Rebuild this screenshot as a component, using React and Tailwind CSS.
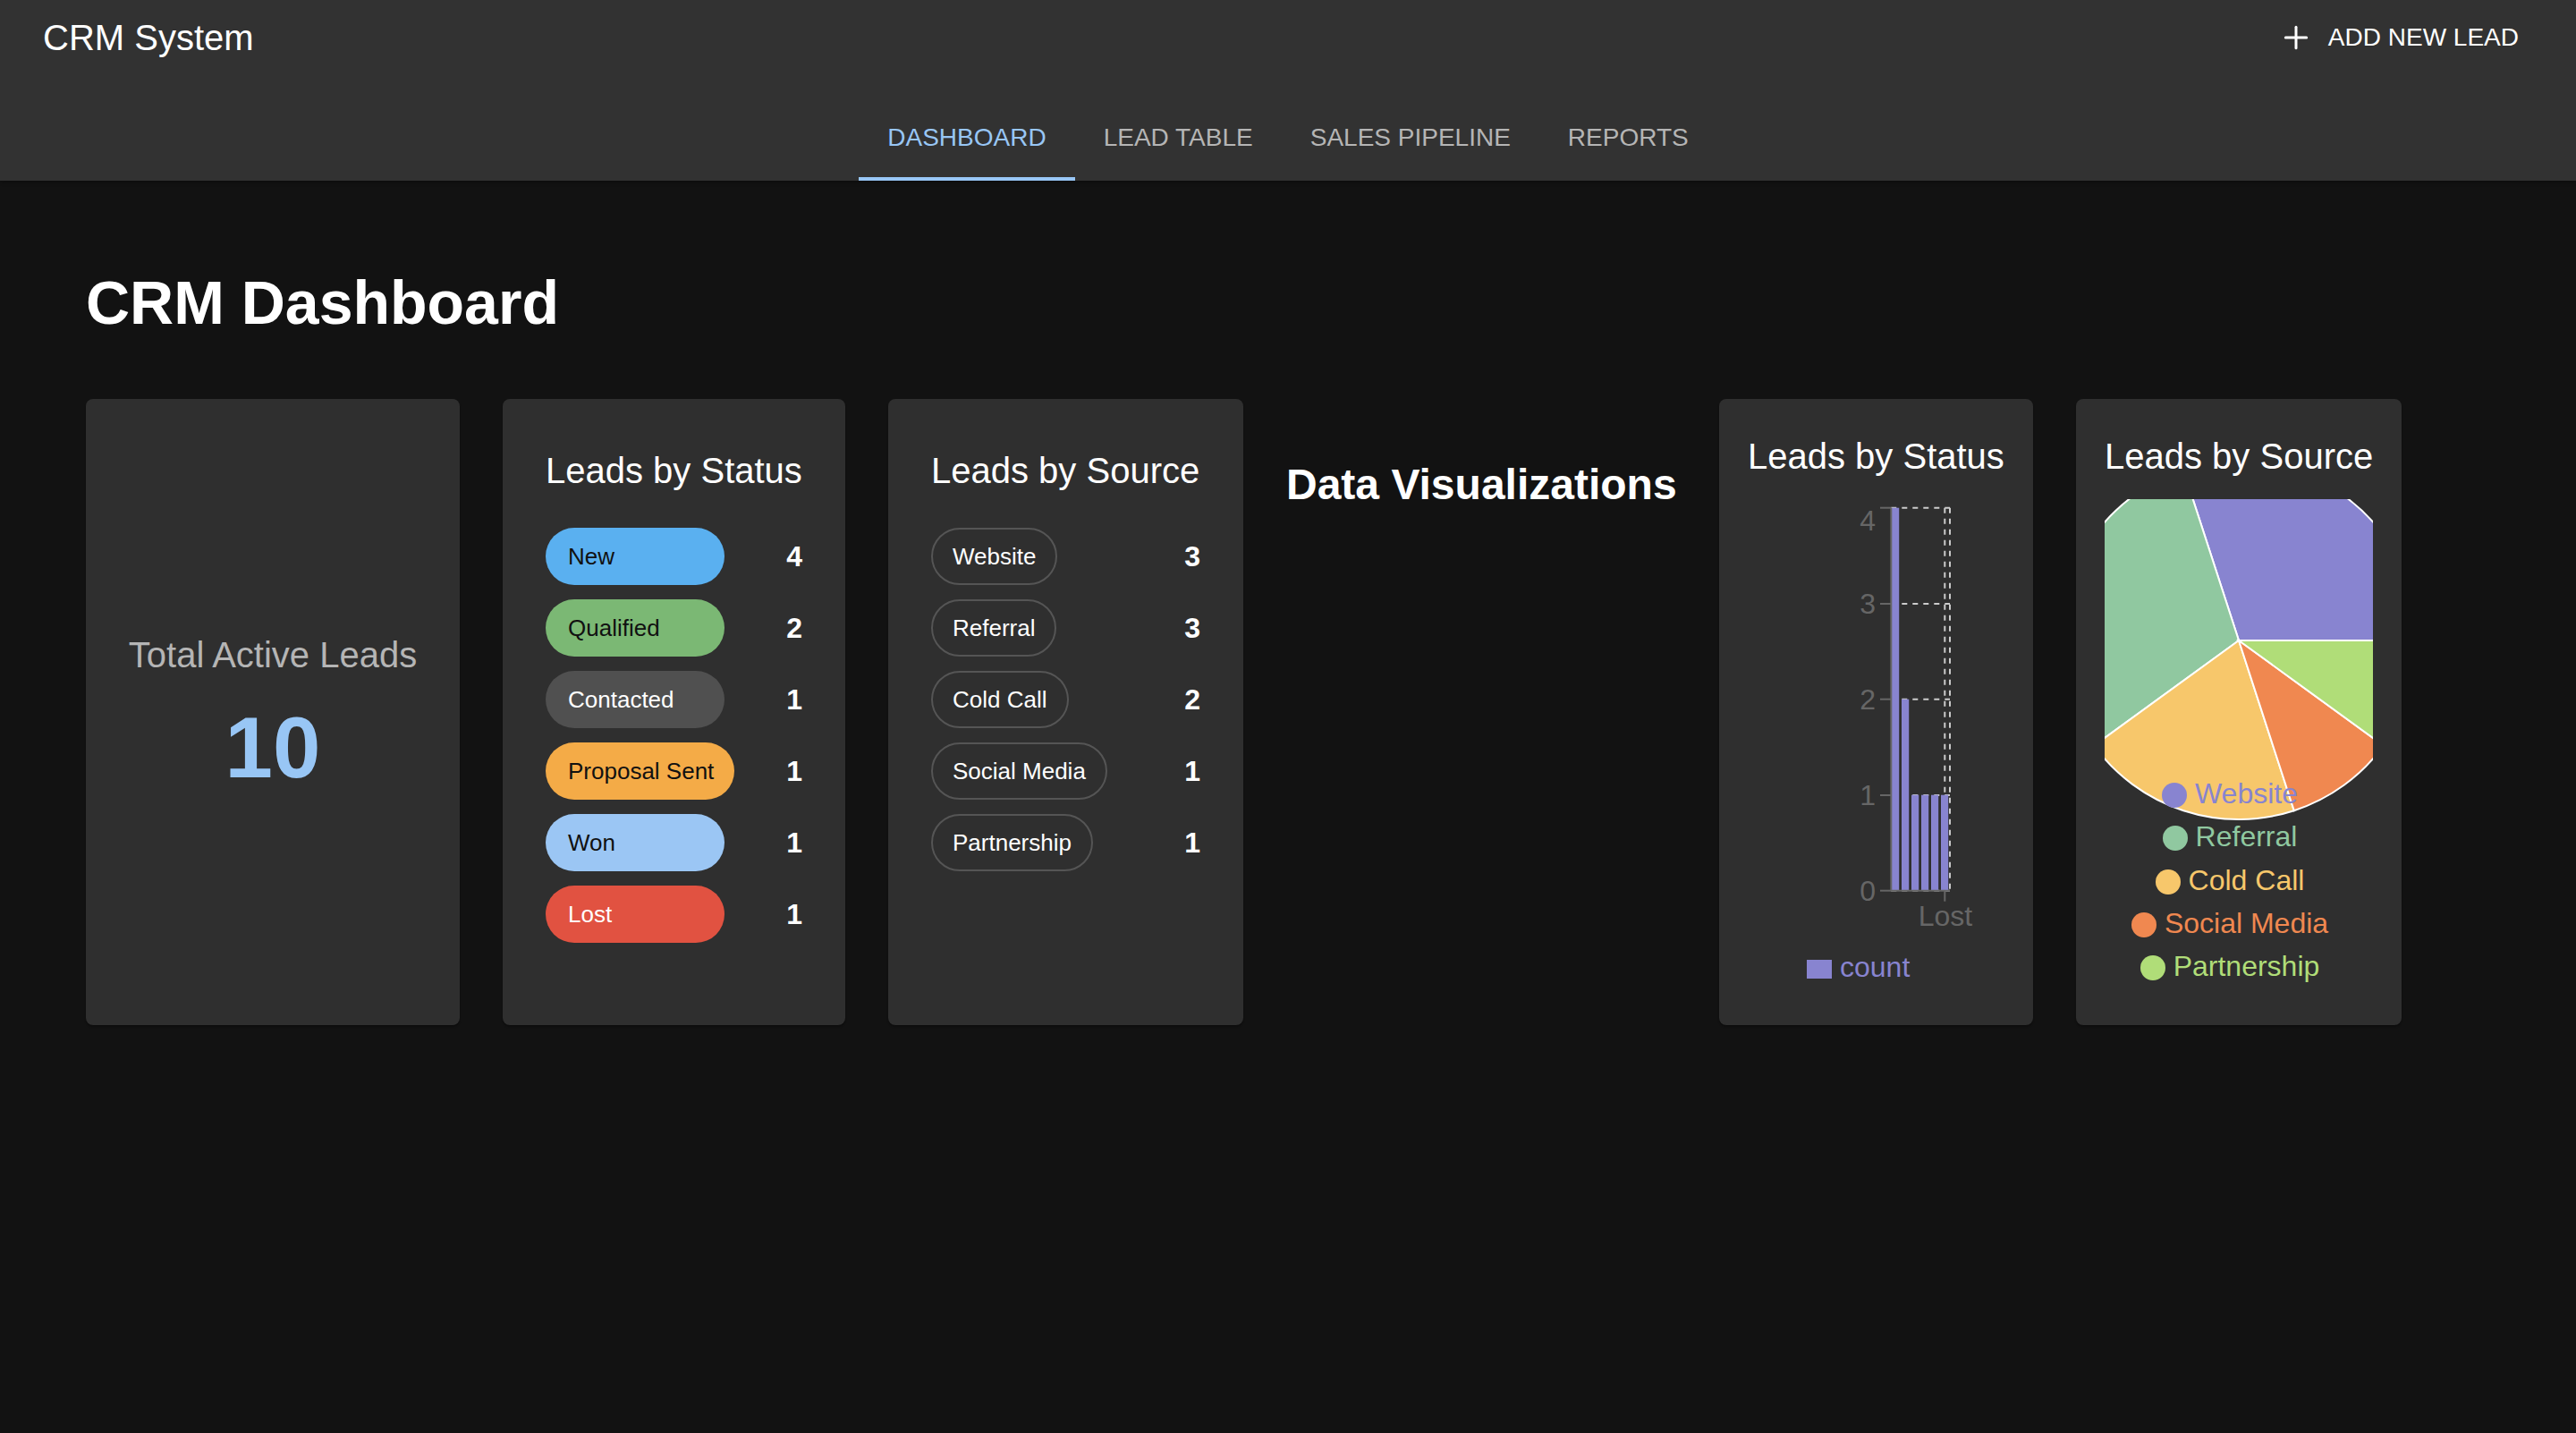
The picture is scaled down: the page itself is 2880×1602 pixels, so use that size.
import { Plus } from 'lucide-react';

const TABS = ['Dashboard', 'Lead Table', 'Sales Pipeline', 'Reports'];

const STATUSES = [
  { name: 'New', count: 4, className: 'bg-[#5ab0f0] text-[#111]' },
  { name: 'Qualified', count: 2, className: 'bg-[#7bb874] text-[#111]' },
  { name: 'Contacted', count: 1, className: 'bg-[#505050] text-white' },
  { name: 'Proposal Sent', count: 1, className: 'bg-[#f4ab47] text-[#111]' },
  { name: 'Won', count: 1, className: 'bg-[#9bc6f4] text-[#111]' },
  { name: 'Lost', count: 1, className: 'bg-[#e15241] text-white' },
];

const SOURCES = [
  { name: 'Website', count: 3, fill: '#8884d0', textClass: 'text-[#8884d0]' },
  { name: 'Referral', count: 3, fill: '#90c8a0', textClass: 'text-[#90c8a0]' },
  { name: 'Cold Call', count: 2, fill: '#f7c76b', textClass: 'text-[#f7c76b]' },
  { name: 'Social Media', count: 1, fill: '#f08850', textClass: 'text-[#f08850]' },
  { name: 'Partnership', count: 1, fill: '#b0dd78', textClass: 'text-[#b0dd78]' },
];

const BAR_VALUES = [4, 2, 1, 1, 1, 1];
// the top label sits below its tick so it stays inside the chart
const Y_TICKS = [
  { label: '4', y: 9.7, baseline: 35 },
  { label: '3', y: 117, baseline: 128 },
  { label: '2', y: 223.7, baseline: 234.7 },
  { label: '1', y: 331, baseline: 342 },
  { label: '0', y: 437.7, baseline: 448.7 },
];

const Card = ({ className, children }) => (
  <div className={`h-[700px] shrink-0 rounded-lg bg-[#2f2f2f] shadow-[0_2px_2px_rgba(0,0,0,0.3)] ${className}`}>
    {children}
  </div>
);

const CardTitle = ({ children }) => (
  <h6 className="h-16 text-[40px] leading-[64px] whitespace-nowrap text-white">{children}</h6>
);

const Row = ({ chip, count }) => (
  <div className="flex h-16 items-center justify-between">
    {chip}
    <span className="text-[32px] font-bold text-white">{count}</span>
  </div>
);

const BarChart = () => (
  <div className="relative mt-4 h-[556px] w-full">
    <svg width="287" height="556">
      {/* grid */}
      <g stroke="#ccc" strokeWidth="2" strokeDasharray="6 6">
        {Y_TICKS.map((t) => (
          <line key={t.label} x1="160.3" x2="226" y1={t.y} y2={t.y} />
        ))}
        <line x1="220.3" x2="220.3" y1="9.7" y2="437.7" />
        <line x1="226" x2="226" y1="9.7" y2="437.7" />
      </g>
      {BAR_VALUES.map((v, i) => {
        const h = v * 107;
        return <rect key={i} x={161 + i * 11} y={437.7 - h} width="8.2" height={h} fill="#8884d0" />;
      })}
      {/* axes */}
      <g stroke="#666" strokeWidth="2">
        <line x1="160.3" x2="160.3" y1="9.7" y2="437.7" />
        <line x1="160.3" x2="226" y1="437.7" y2="437.7" />
        <line x1="220.3" x2="220.3" y1="437.7" y2="449.7" />
        {Y_TICKS.map((t) => (
          <line key={t.label} x1="148" x2="160.3" y1={t.y} y2={t.y} />
        ))}
      </g>
      <g fill="#666" fontSize="32">
        {Y_TICKS.map((t) => (
          <text key={t.label} x="143" y={t.baseline} textAnchor="end">{t.label}</text>
        ))}
        <text x="221" y="477" textAnchor="middle">Lost</text>
      </g>
    </svg>
    <div className="absolute top-[501px] left-[66px] flex h-12 items-center gap-[9px] text-[32px] text-[#8884d0]">
      <span className="h-[21px] w-7 bg-[#8884d0]" />
      <span className="pb-[5px]">count</span>
    </div>
  </div>
);

// slices run counter-clockwise from due east, as in the reference
const pieSlices = () => {
  const total = SOURCES.reduce((sum, s) => sum + s.count, 0);
  const cx = 150;
  const cy = 158;
  const r = 200;
  let angle = 0;
  return SOURCES.map((s) => {
    const next = angle + (s.count / total) * 2 * Math.PI;
    const d = `M${cx} ${cy}L${cx + r * Math.cos(angle)} ${cy - r * Math.sin(angle)}A${r} ${r} 0 0 0 ${cx + r * Math.cos(next)} ${cy - r * Math.sin(next)}Z`;
    angle = next;
    return { name: s.name, fill: s.fill, d };
  });
};

const PieChart = () => (
  <div className="relative mt-4 h-[556px] w-full">
    <svg width="300" height="556">
      {pieSlices().map((s) => (
        <path key={s.name} d={s.d} fill={s.fill} stroke="#fff" strokeWidth="2" />
      ))}
    </svg>
    <ul className="absolute top-[307px] left-0 w-full pr-5">
      {SOURCES.map((s) => (
        <li key={s.name} className={`flex h-[48.3px] items-center justify-center gap-[9px] text-[32px] ${s.textClass}`}>
          <svg width="28" height="28" viewBox="0 0 28 28">
            <circle cx="14" cy="14" r="14" fill={s.fill} />
          </svg>
          <span className="pb-[4px]">{s.name}</span>
        </li>
      ))}
    </ul>
  </div>
);

export default function App() {
  return (
    <div className="min-h-screen bg-[#121212] font-['Liberation_Sans',Arial,sans-serif]">
      <header className="flex h-[202px] flex-col bg-[#323232] shadow-[0_2px_4px_rgba(0,0,0,0.3)]">
        <div className="flex h-[84px] items-center justify-between pr-[64px] pl-12">
          <span className="text-[40px] text-white">CRM System</span>
          <button className="flex items-center gap-[16px] text-[28px] text-white uppercase">
            <Plus size={40} strokeWidth={1.8} />
            Add New Lead
          </button>
        </div>
        <nav className="mt-[22px] flex h-24 justify-center">
          {TABS.map((tab, i) => (
            <button
              key={tab}
              className={`border-b-4 px-8 pt-1 text-[28px] uppercase ${i === 0 ? 'border-[#98c6f5] text-[#98c6f5]' : 'border-transparent text-[#b5b5b5]'}`}
            >
              {tab}
            </button>
          ))}
        </nav>
      </header>

      <main className="px-24 pt-[94px]">
        <h1 className="mb-[66px] text-[68px] leading-[84px] font-bold text-white">CRM Dashboard</h1>
        <div className="flex gap-12">
          <Card className="flex w-[418px] flex-col items-center justify-center">
            <p className="text-[40px] leading-[64px] whitespace-nowrap text-[#b5b5b5]">Total Active Leads</p>
            <p className="mt-4 text-[96px] leading-[112px] font-bold text-[#98c6f5]">10</p>
          </Card>

          <Card className="w-[383px] p-12">
            <CardTitle>Leads by Status</CardTitle>
            <div className="mt-8 flex flex-col gap-4">
              {STATUSES.map((s) => (
                <Row
                  key={s.name}
                  count={s.count}
                  chip={
                    <span className={`flex h-16 min-w-[200px] items-center rounded-full pr-[23px] pl-[25px] text-[26px] ${s.className}`}>
                      {s.name}
                    </span>
                  }
                />
              ))}
            </div>
          </Card>

          <Card className="w-[397px] p-12">
            <CardTitle>Leads by Source</CardTitle>
            <div className="mt-8 flex flex-col gap-4">
              {SOURCES.map((s) => (
                <Row
                  key={s.name}
                  count={s.count}
                  chip={
                    <span className="flex h-16 items-center rounded-full border-2 border-[#555] px-[22px] text-[26px] text-white">
                      {s.name}
                    </span>
                  }
                />
              ))}
            </div>
          </Card>

          <h5 className="mt-[64px] w-[436px] shrink-0 text-[48px] leading-[64px] font-bold whitespace-nowrap text-white">
            Data Visualizations
          </h5>

          <Card className="w-[351px] p-8">
            <CardTitle>Leads by Status</CardTitle>
            <BarChart />
          </Card>

          <Card className="w-[364px] p-8">
            <CardTitle>Leads by Source</CardTitle>
            <PieChart />
          </Card>
        </div>
      </main>
    </div>
  );
}
